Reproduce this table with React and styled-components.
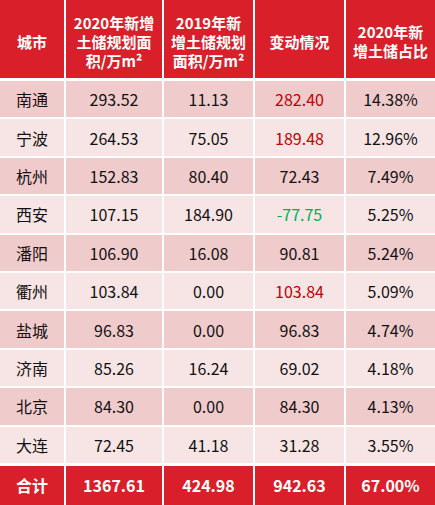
import React from "react";
import styled, { createGlobalStyle } from "styled-components";

const Global = createGlobalStyle`
  html, body { margin: 0; padding: 0; background: #ffffff; }
  body { font-family: "Noto Sans CJK SC", "Noto Sans", sans-serif; }
`;

const Table = styled.div`
  width: 435px;
  height: 505px;
  display: flex;
  flex-direction: column;
  background: #ffffff;
`;

const Row = styled.div`
  display: grid;
  grid-template-columns: 64px 96px 89px 89px 1fr;
  column-gap: 2px;
  height: ${(p) => p.$h}px;
  margin-top: ${(p) => p.$mt || 0}px;
`;

const Cell = styled.div`
  display: flex;
  align-items: center;
  justify-content: center;
  text-align: center;
  box-sizing: border-box;
  padding-top: ${(p) => p.$pt || 0}px;
  background: ${(p) => p.$bg};
  color: ${(p) => p.$color || "#111111"};
  font-size: ${(p) => p.$size || 16}px;
  font-weight: ${(p) => (p.$bold ? 700 : 400)};
  line-height: ${(p) => p.$lh || 20}px;
  white-space: nowrap;
`;

const HeadLine = styled.div`
  height: 19px;
`;

const RED = "#d91f29";
const DARK = "#f0cbcc";
const LIGHT = "#f7e5e6";

const headers = [
  ["城市"],
  ["2020年新增", "土储规划面", "积/万m²"],
  ["2019年新", "增土储规划", "面积/万m²"],
  ["变动情况"],
  ["2020年新", "增土储占比"],
];

const rows = [
  ["南通", "293.52", "11.13", "282.40", "14.38%", "up"],
  ["宁波", "264.53", "75.05", "189.48", "12.96%", "up"],
  ["杭州", "152.83", "80.40", "72.43", "7.49%"],
  ["西安", "107.15", "184.90", "-77.75", "5.25%", "down"],
  ["潘阳", "106.90", "16.08", "90.81", "5.24%"],
  ["衢州", "103.84", "0.00", "103.84", "5.09%", "up"],
  ["盐城", "96.83", "0.00", "96.83", "4.74%"],
  ["济南", "85.26", "16.24", "69.02", "4.18%"],
  ["北京", "84.30", "0.00", "84.30", "4.13%"],
  ["大连", "72.45", "41.18", "31.28", "3.55%"],
];

const total = ["合计", "1367.61", "424.98", "942.63", "67.00%"];

const changeColor = (flag) =>
  flag === "up" ? "#c00000" : flag === "down" ? "#00b050" : "#111111";

export default function App() {
  return (
    <>
      <Global />
      <Table>
        <Row $h={78}>
          {headers.map((lines, i) => (
            <Cell key={i} $bg={RED} $color="#ffffff" $bold $size={15} $lh={19} $pt={4}>
              <div>
                {lines.map((l, j) => (
                  <HeadLine key={j}>{l}</HeadLine>
                ))}
              </div>
            </Cell>
          ))}
        </Row>
        {rows.map((r, i) => (
          <Row key={r[0]} $h={36.4} $mt={i === 0 ? 3 : 2}>
            {r.slice(0, 5).map((v, j) => (
              <Cell
                key={j}
                $bg={i % 2 === 0 ? DARK : LIGHT}
                $color={j === 3 ? changeColor(r[5]) : "#111111"}
              >
                {v}
              </Cell>
            ))}
          </Row>
        ))}
        <Row $h={39} $mt={3}>
          {total.map((v, j) => (
            <Cell key={j} $bg={RED} $color="#ffffff" $bold>
              {v}
            </Cell>
          ))}
        </Row>
      </Table>
    </>
  );
}
